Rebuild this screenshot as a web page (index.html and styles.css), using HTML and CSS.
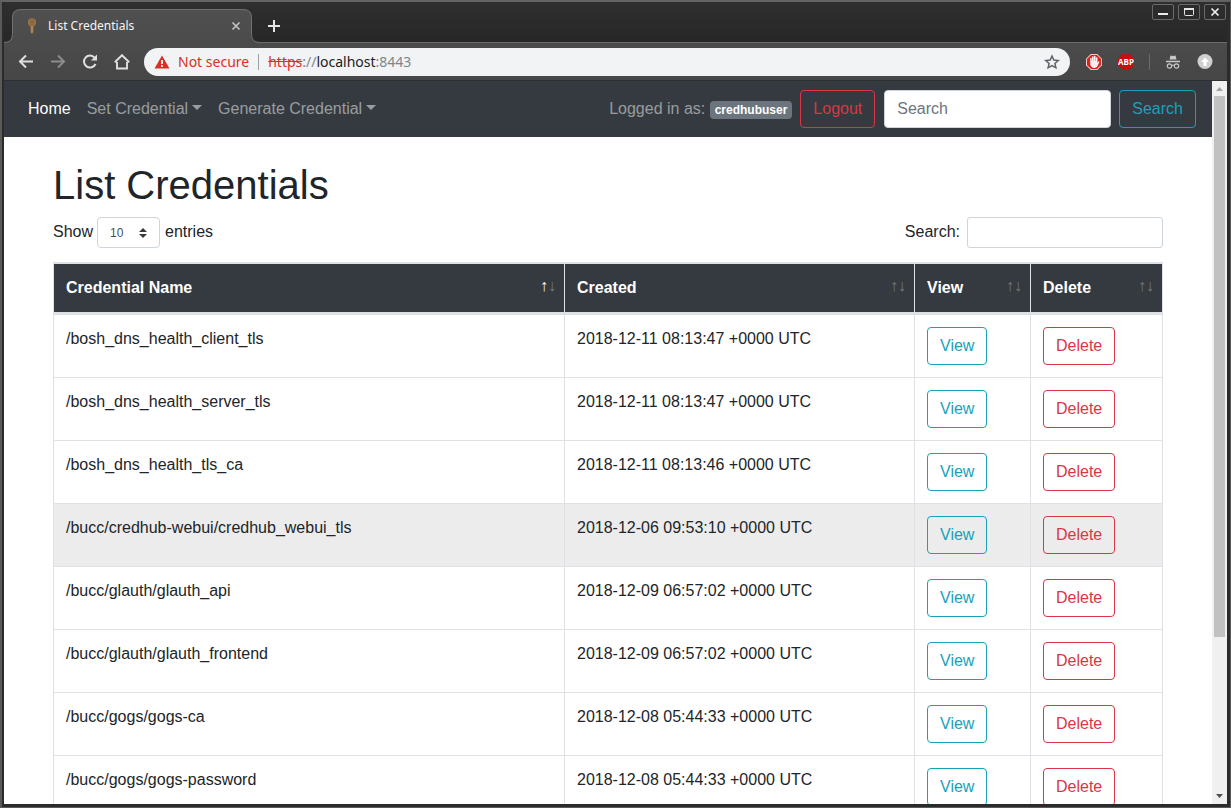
FILE: index.html
```html
<!DOCTYPE html>
<html lang="en">
<head>
<meta charset="utf-8">
<title>List Credentials</title>
<link rel="stylesheet" href="styles.css">
</head>
<body>
<div class="window">
  <header class="tabstrip">
    <div class="tab">
      <svg class="tab-shape" width="256" height="34" viewBox="0 0 256 34" aria-hidden="true">
        <defs><linearGradient id="tabfill" x1="0" y1="0" x2="0" y2="1"><stop offset="0" stop-color="#505050"/><stop offset="1" stop-color="#4b4b4b"/></linearGradient></defs>
        <path d="M0 34V33.500Q8 33.500 8 25.500V8.500Q8 .5 16 .5H239.500Q247.500 .5 247.500 8.500V25.500Q247.500 33.500 255.500 33.500V34Z" fill="url(#tabfill)"/>
        <path d="M0 33.500Q8.500 33.500 8.500 25.500V8.500Q8.500 .5 16.500 .5H239.500Q247.500 .5 247.500 8.500V25.500Q247.500 33.500 256 33.500" fill="none" stroke="#717171"/>
      </svg>
      <svg class="favicon" width="10" height="16" viewBox="0 0 10 16" aria-hidden="true">
        <path d="M3 .5H7L9 2.500V6L7 8.500H6.500V14L5.500 15.500H4L3.500 14V8.500H3L1 6V2.500Z" fill="#9c7340"/>
        <path d="M3 2.500H7M2.500 4.500H7.500M3.500 6.500H6.500" stroke="#7a6040" fill="none"/>
        <path d="M5 8.500V14.500" stroke="#b39a70"/>
      </svg>
      <span class="tab-title">List Credentials</span>
      <button class="icon-btn tab-close" aria-label="Close tab"><svg width="10" height="10" viewBox="0 0 10 10"><path d="M1.500 1.500L8.500 8.500M8.500 1.500L1.500 8.500" stroke="#c4c4c4" stroke-width="1.600"/></svg></button>
    </div>
    <button class="icon-btn new-tab" aria-label="New tab"><svg width="12" height="12" viewBox="0 0 12 12"><path d="M6 0V12M0 6H12" stroke="#e6e6e6" stroke-width="2"/></svg></button>
    <div class="window-controls">
      <button class="win-btn" aria-label="Minimize"><svg width="20" height="14" viewBox="0 0 20 14"><path d="M5 9H15" stroke="#eee" stroke-width="2"/></svg></button>
      <button class="win-btn" aria-label="Maximize"><svg width="20" height="14" viewBox="0 0 20 14"><rect x="5.500" y="3.500" width="9" height="7" rx="1" fill="none" stroke="#e6e6e6"/><path d="M5 4H15" stroke="#e6e6e6" stroke-width="2"/></svg></button>
      <button class="win-btn" aria-label="Close"><svg width="20" height="14" viewBox="0 0 20 14"><path d="M6.500 3.500L13.500 10.500M13.500 3.500L6.500 10.500" stroke="#eee" stroke-width="1.700"/></svg></button>
    </div>
  </header>
  <div class="toolbar">
    <div class="nav-buttons">
      <button class="icon-btn" aria-label="Back"><svg width="16" height="16" viewBox="0 0 16 16"><path d="M15 7.500H2.500M8 1.500L2 7.500L8 13.500" fill="none" stroke="#e0e0e0" stroke-width="2"/></svg></button>
      <button class="icon-btn" aria-label="Forward"><svg width="16" height="16" viewBox="0 0 16 16"><path d="M1 7.500H13.500M8 1.500L14 7.500L8 13.500" fill="none" stroke="#8c8c8c" stroke-width="2"/></svg></button>
      <button class="icon-btn" aria-label="Reload"><svg width="16" height="16" viewBox="0 0 16 16"><path d="M13.500 10A6 6 0 1 1 12.600 3.700" fill="none" stroke="#e0e0e0" stroke-width="2"/><path d="M15 .5V6.500H9Z" fill="#e0e0e0"/></svg></button>
      <button class="icon-btn" aria-label="Home"><svg width="16" height="16" viewBox="0 0 16 16"><path d="M3 8V14.500H13V8M.8 8.200L8 1.200L15.200 8.200" fill="none" stroke="#e0e0e0" stroke-width="1.900"/></svg></button>
    </div>
    <div class="omnibox">
      <svg width="16" height="14" viewBox="0 0 16 14" aria-hidden="true"><path d="M8 .5L15.500 13.500H.5Z" fill="#d93025"/><path d="M8 5V9M8 10V12" stroke="#fff" stroke-width="1.700"/></svg>
      <span class="not-secure">Not secure</span>
      <span class="omni-sep"></span>
      <span class="url"><s>https</s>://<b>localhost</b>:8443</span>
      <button class="icon-btn" aria-label="Bookmark"><svg width="16" height="16" viewBox="0 0 16 16"><path d="M8 2L9.800 6.100L14.200 6.500L10.900 9.400L11.900 13.800L8 11.500L4.100 13.800L5.100 9.400L1.800 6.500L6.200 6.100Z" fill="none" stroke="#5f6368" stroke-width="1.500"/></svg></button>
    </div>
    <div class="extensions">
      <button class="icon-btn" aria-label="Ad blocker"><svg width="16" height="16" viewBox="0 0 16 16"><path d="M4.700 0H11.300L16 4.700V11.300L11.300 16H4.700L0 11.300V4.700Z" fill="#f3c9c7"/><path d="M5.100 1H10.900L15 5.100V10.900L10.900 15H5.100L1 10.900V5.100Z" fill="#e0201b"/><path d="M4.200 9V4.300Q4.900 3.300 5.700 4.300V7H6V2.700Q6.800 1.700 7.600 2.700V6.800H7.900V2.200Q8.800 1.400 9.600 2.400V7H9.900V3.600Q10.800 2.800 11.500 3.800V8.800L12.400 7.400Q13.500 7 13.400 8L11.300 12.500Q10 14.200 7.900 13.900Q4.200 13.600 4.200 9Z" fill="#f5f0ef"/></svg></button>
      <button class="icon-btn" aria-label="Adblock Plus"><svg width="16" height="16" viewBox="0 0 16 16"><path d="M4.700 0H11.300L16 4.700V11.300L11.300 16H4.700L0 11.300V4.700Z" fill="#c70d0d"/><text class="abp" x="8" y="11" text-anchor="middle">ABP</text></svg></button>
      <span class="ext-sep"></span>
      <button class="icon-btn" aria-label="Incognito"><svg width="14" height="14" viewBox="0 0 14 14"><path d="M3.500 4.500L4.500 .5L7 1L9.500 .5L10.500 4.500Z" fill="#c8c8c8"/><path d="M0 6.500H14" stroke="#c8c8c8" stroke-width="1.500"/><circle cx="3.500" cy="11" r="2.200" fill="none" stroke="#c8c8c8" stroke-width="1.200"/><circle cx="10.500" cy="11" r="2.200" fill="none" stroke="#c8c8c8" stroke-width="1.200"/><path d="M5.500 10.500Q7 9.500 8.500 10.500" fill="none" stroke="#c8c8c8"/></svg></button>
      <button class="icon-btn" aria-label="Update"><svg width="16" height="16" viewBox="0 0 16 16"><circle cx="8" cy="7.500" r="7.500" fill="#d0d0d0"/><path d="M8 3.500L12 8H9.500V12H6.500V8H4Z" fill="#fff"/></svg></button>
    </div>
  </div>
  <div class="viewport">
    <div class="page">
      <nav class="navbar">
        <ul class="nav-list">
          <li><a class="nav-link active" href="#">Home</a></li>
          <li><a class="nav-link dropdown" href="#">Set Credential</a></li>
          <li><a class="nav-link dropdown" href="#">Generate Credential</a></li>
        </ul>
        <form class="nav-form">
          <span class="nav-text">Logged in as: <span class="badge">credhubuser</span></span>
          <button class="btn btn-danger" type="button">Logout</button>
          <input class="nav-search" type="search" placeholder="Search" aria-label="Search">
          <button class="btn btn-info" type="button">Search</button>
        </form>
      </nav>
      <main class="container">
        <h1>List Credentials</h1>
        <div class="table-tools">
          <label>Show <select class="length"><option>10</option><option>25</option><option>50</option></select> entries</label>
          <label class="filter">Search: <input class="filter-input" type="search"></label>
        </div>
        <table class="credentials">
          <colgroup><col><col class="col-created"><col class="col-view"><col class="col-delete"></colgroup>
          <thead><tr><th class="asc">Credential Name</th><th>Created</th><th>View</th><th>Delete</th></tr></thead>
          <tbody>
            <tr><td>/bosh_dns_health_client_tls</td><td>2018-12-11 08:13:47 +0000 UTC</td><td><button class="btn btn-info">View</button></td><td><button class="btn btn-danger">Delete</button></td></tr>
            <tr><td>/bosh_dns_health_server_tls</td><td>2018-12-11 08:13:47 +0000 UTC</td><td><button class="btn btn-info">View</button></td><td><button class="btn btn-danger">Delete</button></td></tr>
            <tr><td>/bosh_dns_health_tls_ca</td><td>2018-12-11 08:13:46 +0000 UTC</td><td><button class="btn btn-info">View</button></td><td><button class="btn btn-danger">Delete</button></td></tr>
            <tr class="hovered"><td>/bucc/credhub-webui/credhub_webui_tls</td><td>2018-12-06 09:53:10 +0000 UTC</td><td><button class="btn btn-info">View</button></td><td><button class="btn btn-danger">Delete</button></td></tr>
            <tr><td>/bucc/glauth/glauth_api</td><td>2018-12-09 06:57:02 +0000 UTC</td><td><button class="btn btn-info">View</button></td><td><button class="btn btn-danger">Delete</button></td></tr>
            <tr><td>/bucc/glauth/glauth_frontend</td><td>2018-12-09 06:57:02 +0000 UTC</td><td><button class="btn btn-info">View</button></td><td><button class="btn btn-danger">Delete</button></td></tr>
            <tr><td>/bucc/gogs/gogs-ca</td><td>2018-12-08 05:44:33 +0000 UTC</td><td><button class="btn btn-info">View</button></td><td><button class="btn btn-danger">Delete</button></td></tr>
            <tr><td>/bucc/gogs/gogs-password</td><td>2018-12-08 05:44:33 +0000 UTC</td><td><button class="btn btn-info">View</button></td><td><button class="btn btn-danger">Delete</button></td></tr>
          </tbody>
        </table>
      </main>
    </div>
    <div class="scrollbar" aria-hidden="true">
      <svg width="15" height="15" viewBox="0 0 15 15"><path d="M4 10H11L7.500 6Z" fill="#a3a3a3"/></svg>
      <div class="track"><div class="thumb"></div></div>
      <svg width="15" height="15" viewBox="0 0 15 15"><path d="M4 5H11L7.500 9Z" fill="#505050"/></svg>
    </div>
  </div>
</div>
</body>
</html>
```
FILE: styles.css
```css
* { box-sizing: border-box; }
body {
  margin: 0;
  font: 16px/24px "Liberation Sans", Arial, sans-serif;
  color: #212529;
  background: #2b2b2b;
}
button, input, select { font: inherit; margin: 0; }

.window {
  display: flex;
  flex-direction: column;
  height: 100vh;
  overflow: hidden;
  padding: 0 3px 3px 2px;
  background: #2b2b2b;
  border: 2px solid #5a5a58;
  border-top-color: #636363;
  border-right-width: 1px;
  border-bottom-width: 1px;
}
.icon-btn {
  display: flex;
  align-items: center;
  justify-content: center;
  padding: 0;
  border: 0;
  background: none;
}

.tabstrip {
  display: flex;
  align-items: flex-end;
  flex: none;
  height: 41px;
  background: linear-gradient(#2f2f2f, #272727);
  border-bottom: 1px solid #6b6b6b;
}
.tab {
  position: relative;
  display: flex;
  align-items: center;
  width: 256px;
  height: 34px;
  margin-bottom: -1px;
  padding: 0 18px 0 23px;
}
.tab-shape { position: absolute; left: 0; top: 0; }
.favicon, .tab-title, .tab-close { position: relative; }
.tab-title {
  flex: 1;
  margin-left: 11px;
  font: 12px/18px "Noto Sans", sans-serif;
  color: #f4f4f4;
}
.tab-close { width: 12px; }
.new-tab { width: 12px; height: 32px; margin-left: 8px; }
.window-controls {
  display: flex;
  gap: 4px;
  align-self: flex-start;
  margin: 2px 1px 0 auto;
}
.win-btn {
  display: flex;
  padding: 0;
  background: #2c2c2c;
  border: 1px solid #6a6a6a;
  border-radius: 2px;
}

.toolbar {
  display: flex;
  align-items: center;
  flex: none;
  height: 38px;
  padding: 0 14px;
  background: linear-gradient(#4b4b4b, #464646);
  border-bottom: 1px solid #303030;
}
.nav-buttons { display: flex; gap: 16px; }
.omnibox {
  display: flex;
  flex: 1;
  align-items: center;
  height: 28px;
  margin: 0 16px 0 14px;
  padding: 0 10px;
  border-radius: 14px;
  background: #f1f3f4;
  font: 14px/20px "Noto Sans", sans-serif;
}
.not-secure { margin-left: 8px; color: #d93025; }
.omni-sep { width: 1px; height: 16px; margin: 0 9px; background: #9aa0a6; }
.url { flex: 1; color: #80868b; }
.url s { color: #d93025; }
.url b { font-weight: 400; color: #202124; }
.extensions { display: flex; align-items: center; gap: 16px; }
.extensions .icon-btn { width: 16px; }
.ext-sep { width: 1px; height: 16px; margin: 0 -1px; background: #6c6c6c; }
.abp { font: bold 8px "Open Sans", sans-serif; fill: #fff; }

.viewport { display: flex; flex: 1; min-height: 0; background: #fff; }
.page { flex: 1; min-width: 0; overflow: hidden; }
.scrollbar {
  display: flex;
  flex-direction: column;
  flex: none;
  width: 15px;
  background: #f0f0f0;
}
.track { flex: 1; padding: 0 2px; }
.thumb { height: 78%; background: #c1c1c1; }

.navbar {
  display: flex;
  align-items: center;
  justify-content: space-between;
  padding: 8px 16px;
  background: #343a40;
}
.nav-list { display: flex; margin: 0; padding: 0; list-style: none; }
.nav-link {
  display: block;
  padding: 8px;
  color: rgba(255, 255, 255, .5);
  text-decoration: none;
}
.nav-link.active { color: #fff; }
.dropdown::after {
  content: "";
  display: inline-block;
  margin-left: 4px;
  vertical-align: 4px;
  border: 5px solid transparent;
  border-top-color: currentColor;
  border-bottom: 0;
}
.nav-form { display: flex; align-items: center; gap: 8px; }
.nav-text { color: rgba(255, 255, 255, .5); }
.badge {
  display: inline-block;
  padding: 3px 5px;
  border-radius: 4px;
  background: #6c757d;
  color: #fff;
  font-size: 12px;
  line-height: 12px;
  font-weight: 700;
  vertical-align: baseline;
}
.nav-search {
  width: 227px;
  height: 38px;
  margin-left: 1px;
  padding: 6px 12px;
  border: 1px solid #ced4da;
  border-radius: 4px;
  background: #fff;
}
.nav-search::placeholder { color: #6c757d; opacity: 1; }
.btn {
  display: inline-block;
  padding: 6px 12px;
  border: 1px solid;
  border-radius: 4px;
  background: transparent;
  line-height: 24px;
  vertical-align: middle;
}
.btn-info { color: #17a2b8; border-color: #17a2b8; }
.btn-danger { color: #dc3545; border-color: #dc3545; }

.container { max-width: 1140px; margin: 0 auto; padding: 24px 15px; }
h1 { margin: 0 0 8px; font-size: 40px; line-height: 48px; font-weight: 500; }
.table-tools { display: flex; justify-content: space-between; margin-bottom: 14px; }
.table-tools label {
  display: flex;
  align-items: center;
  gap: 4px;
  height: 31px;
  padding-bottom: 2px;
}
.table-tools .filter { gap: 7px; }
.length {
  appearance: none;
  flex: none;
  width: 63px;
  height: 31px;
  margin: 2px 1px 0 0;
  padding: 3px 12px 5px;
  border: 1px solid #ced4da;
  border-radius: 4px;
  color: #495057;
  font-size: 12px;
  background: #fff url("data:image/svg+xml,%3Csvg xmlns='http://www.w3.org/2000/svg' viewBox='0 0 4 5'%3E%3Cpath fill='%23343a40' d='M2 0L0 2h4zm0 5L0 3h4z'/%3E%3C/svg%3E") no-repeat right 12px center / 8px 10px;
}
.filter-input {
  width: 196px;
  height: 31px;
  margin-top: 2px;
  padding: 4px 8px;
  border: 1px solid #ced4da;
  border-radius: 3px;
  background: #fff;
}

.credentials {
  width: 100%;
  table-layout: fixed;
  border: 1px solid #dee2e6;
  border-spacing: 0;
  border-collapse: separate;
}
.col-created { width: 350px; }
.col-view { width: 116px; }
.col-delete { width: 131px; }
.credentials th, .credentials td {
  padding: 12px;
  text-align: left;
  vertical-align: top;
  border: 0 solid #dee2e6;
  border-top-width: 1px;
  border-right-width: 1px;
}
.credentials th:last-child, .credentials td:last-child { border-right-width: 0; }
.credentials th {
  position: relative;
  background: #343a40;
  background-clip: padding-box;
  color: #fff;
  border-bottom-width: 2px;
}
.credentials th::before, .credentials th::after {
  position: absolute;
  bottom: 14px;
  font-family: "Liberation Serif", serif;
  font-weight: 400;
  opacity: .3;
}
.credentials th::before { content: "\2191"; right: 16px; }
.credentials th::after { content: "\2193"; right: 8px; }
.credentials .asc::before { opacity: 1; }
.hovered td { background: #ececec; }
```
